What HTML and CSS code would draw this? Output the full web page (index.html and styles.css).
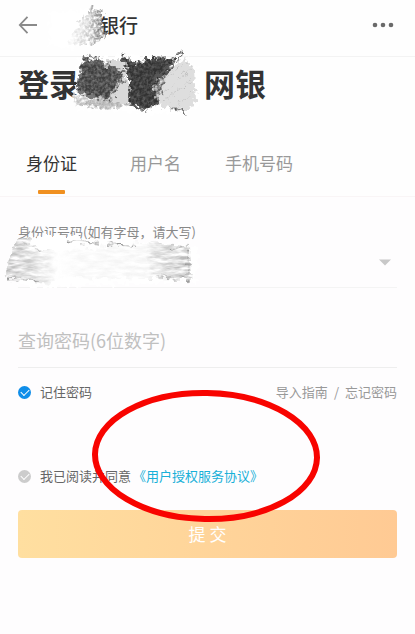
FILE: index.html
```html
<!DOCTYPE html>
<html lang="zh-CN">
<head>
<meta charset="utf-8">
<meta name="viewport" content="width=device-width, initial-scale=1">
<title>登录网银</title>
<link rel="stylesheet" href="styles.css">
</head>
<body>
<header class="topbar">
  <button class="icon-button" type="button" aria-label="返回">
    <svg width="20" height="20" viewBox="0 0 20 20" fill="none" stroke="#8a8a8a" stroke-width="1.8"><path d="M9.5 1.8 1.8 10l7.7 8.2M2 10h17"/></svg>
  </button>
  <p class="bank">银行</p>
  <button class="icon-button more" type="button" aria-label="更多">
    <svg width="22" height="6" viewBox="0 0 22 6" fill="#6a6a6a"><circle cx="3" cy="3" r="2.3"/><circle cx="11" cy="3" r="2.3"/><circle cx="19" cy="3" r="2.3"/></svg>
  </button>
</header>
<main>
  <h1 class="title"><span>登录</span><span>网银</span></h1>
  <nav class="tabs">
    <a class="tab active" href="#id">身份证</a>
    <a class="tab" href="#user">用户名</a>
    <a class="tab" href="#phone">手机号码</a>
  </nav>
  <form class="form">
    <div class="field id-field">
      <label for="idno">身份证号码(如有字母，请大写)</label>
      <div class="field-row">
        <input id="idno" type="text">
        <button class="icon-button" type="button" aria-label="展开">
          <svg width="12" height="7" viewBox="0 0 12 7" fill="#c8c8c8"><path d="M0 .5h12L6 6.5z"/></svg>
        </button>
      </div>
    </div>
    <div class="field pw-field">
      <input type="password" placeholder="查询密码(6位数字)" aria-label="查询密码(6位数字)">
    </div>
    <div class="options">
      <label class="check"><input type="checkbox" checked>记住密码</label>
      <p class="help"><a href="#guide">导入指南</a><span>/</span><a href="#forgot">忘记密码</a></p>
    </div>
    <div class="agreement">
      <label class="check"><input type="checkbox">我已阅读并同意</label><a href="#terms">《用户授权服务协议》</a>
    </div>
    <button class="submit" type="submit">提 交</button>
  </form>
</main>
<svg class="marks" width="415" height="634" viewBox="0 0 415 634" aria-hidden="true">
  <defs>
    <filter id="pencil" x="-10%" y="-20%" width="120%" height="140%" color-interpolation-filters="sRGB">
      <feTurbulence type="fractalNoise" baseFrequency=".2" numOctaves="2" seed="4" result="warp"/>
      <feDisplacementMap in="SourceGraphic" in2="warp" scale="14" xChannelSelector="R" yChannelSelector="G" result="rough"/>
      <feTurbulence type="fractalNoise" baseFrequency=".35" numOctaves="2" seed="9"/>
      <feColorMatrix values="0 0 0 0 0  0 0 0 0 0  0 0 0 0 0  2.4 0 0 0 -.6" result="grain"/>
      <feComposite in="rough" in2="grain" operator="in"/>
      <feGaussianBlur stdDeviation=".5"/>
    </filter>
    <filter id="strokes" x="-10%" y="-20%" width="120%" height="140%" color-interpolation-filters="sRGB">
      <feTurbulence type="fractalNoise" baseFrequency=".15" numOctaves="2" seed="4" result="warp"/>
      <feDisplacementMap in="SourceGraphic" in2="warp" scale="12" xChannelSelector="R" yChannelSelector="G" result="rough"/>
      <feTurbulence type="fractalNoise" baseFrequency=".08 .3" numOctaves="3" seed="7"/>
      <feColorMatrix values="0 0 0 0 0  0 0 0 0 0  0 0 0 0 0  2 0 0 0 -.5" result="grain"/>
      <feComposite in="rough" in2="grain" operator="in"/>
      <feGaussianBlur stdDeviation=".7"/>
    </filter>
    <filter id="edge" x="-10%" y="-20%" width="120%" height="140%" color-interpolation-filters="sRGB">
      <feTurbulence type="fractalNoise" baseFrequency=".2" numOctaves="2" seed="2" result="warp"/>
      <feDisplacementMap in="SourceGraphic" in2="warp" scale="12" xChannelSelector="R" yChannelSelector="G"/>
      <feGaussianBlur stdDeviation=".5"/>
    </filter>
    <linearGradient id="fade"><stop offset="0" stop-color="#fff"/><stop offset=".5" stop-color="#d4d4d4"/><stop offset="1" stop-color="#666"/></linearGradient>
    <linearGradient id="swath"><stop offset="0" stop-color="#b4b4b4"/><stop offset=".2" stop-color="#d8d8d8"/><stop offset=".28" stop-color="#fff"/><stop offset=".4" stop-color="#f6f6f6"/><stop offset=".76" stop-color="#f4f4f4"/><stop offset=".8" stop-color="#d8d8d8"/><stop offset="1" stop-color="#b4b4b4"/></linearGradient>
  </defs>
  <path fill="#fff" filter="url(#edge)" d="M50 12 98 8l3 30-22 10-30-2z"/>
  <path fill="url(#fade)" filter="url(#pencil)" d="M66 46 80 22l10-14 12 2 0 14 5 14-14 6z"/>
  <g filter="url(#edge)">
    <path fill="#fff" d="M77 60 120 55l66 2 16 17-3 32-11 8-110-4-4-10z"/>
    <path fill="#d9d9d9" d="m108 60 16 0 8 44-24 4-32-4 30-8z"/>
    <path fill="#747474" d="m83 57 40 15-16 28-31-8z"/>
    <path fill="#5a5a5a" d="m122 54 13 10 14-5 28-1-12 20-7 26-13 6-16-6 0-28z"/>
    <path fill="#dedede" d="m184 57-32 28 6 20 28 8 10-12-2-32z"/>
  </g>
  <g filter="url(#pencil)">
    <path fill="#222" opacity=".65" d="m83 57 40 15-16 28-31-8z"/>
    <path fill="#1c1c1c" opacity=".65" d="m121 53 14 11 14-5 30-2-14 20-7 26-12 7-18-7 2-28z"/>
    <path fill="#888" opacity=".5" d="m73 92 34 8 24 4-20 6-36-5z"/>
    <path fill="none" stroke="#555" stroke-width="3" d="m152 82 31-28M172 106l14 8M109 101l14-26M122 72 88 55"/>
    <path fill="none" stroke="#aaa" opacity=".6" d="m158 86 28-24m-25 32 31-26m-27 33 29-24m-18 29 20-16"/>
  </g>
  <path fill="#fff" filter="url(#edge)" d="m24 243 14-7 30 0 34 4 90 6 6 4-2 32-164 5-15-5z"/>
  <g filter="url(#strokes)">
    <path fill="url(#swath)" d="m14 240 10-4 18 14h26l70-7 51 3 2 34-36-1-92-1-18 6-40-7 5-14z"/>
    <path fill="none" stroke="#999" stroke-width="2" d="m66 241 34 3m8 0 28 2m35 2h17v31l-34-2M8 279l30 1M20 240l22 13"/>
  </g>
  <ellipse cx="206" cy="456" rx="111" ry="63" transform="rotate(1 206 456)" fill="none" stroke="#f80400" stroke-width="6"/>
</svg>
</body>
</html>
```

FILE: styles.css
```css
* { box-sizing: border-box; }
body {
  margin: 0;
  position: relative;
  background: #fefefe;
  color: #333;
  font-family: "Noto Sans CJK SC", sans-serif;
  font-size: 13px;
  line-height: 20px;
}
h1, p { margin: 0; }
a { color: inherit; text-decoration: none; }
button, input { font: inherit; color: inherit; border: 0; background: none; padding: 0; }
svg { display: block; }

.topbar {
  display: flex;
  align-items: center;
  height: 57px;
  padding: 0 21px 6px 18px;
  border-bottom: 1px solid #f3f3f3;
}
.bank { margin-left: 62px; font-size: 19px; font-weight: 500; line-height: 28px; }
.more { margin-left: auto; }

.title {
  display: flex;
  gap: 124px;
  padding: 4px 18px 8px;
  font-size: 31px;
  font-weight: 700;
  line-height: 44px;
}

.tabs {
  display: flex;
  gap: 44px;
  padding: 37px 26px 0;
  border-bottom: 1px solid #f9f5f6;
  font-size: 17px;
  line-height: 26px;
  color: #999;
}
.tab {
  display: flex;
  flex-direction: column;
  align-items: center;
  gap: 14px;
  padding-bottom: 2px;
}
.tab::after { content: ""; width: 27px; height: 4px; border-radius: 1px; }
.active { margin-right: 9px; color: #333; }
.active::after { background: #f09020; }

.form { padding: 0 18px 76px; background: #fefdfe; }
.field { border-bottom: 1px solid #eee; }
.field input { flex: 1; width: 100%; min-width: 0; outline: 0; }
.id-field { padding-top: 25px; border-color: #f4f4f4; color: #888; }
.id-field label { display: block; }
.field-row { display: flex; align-items: center; height: 45px; padding: 0 6px 5px 0; }
.pw-field { padding: 39px 0 14px; font-size: 18px; line-height: 26px; }
.pw-field input { display: block; height: 26px; }
.pw-field input::placeholder { color: #c0c0c0; opacity: 1; }

.options { display: flex; justify-content: space-between; padding-top: 14px; color: #666; }
.check { display: flex; align-items: center; gap: 9px; color: #666; }
.check input {
  display: grid;
  place-items: center;
  width: 13px;
  height: 13px;
  margin: 0;
  border-radius: 50%;
  background: #ccc;
  appearance: none;
}
.check input:checked { background: #108ee9; }
.check input::after {
  content: "";
  width: 7px;
  height: 4px;
  margin-bottom: 2px;
  border: solid #fff;
  border-width: 0 0 1px 1px;
  transform: rotate(-45deg);
}
.help { display: flex; gap: 6px; color: #999; }
.agreement { display: flex; gap: 2px; padding-top: 64px; }
.agreement a { color: #18b0d8; }
.submit {
  display: block;
  width: 100%;
  height: 48px;
  margin-top: 24px;
  border-radius: 4px;
  background: linear-gradient(90deg, #ffdfa0, #ffca94);
  color: #fff;
  font-size: 17px;
}
.marks { position: absolute; top: 0; left: 0; pointer-events: none; }
```
